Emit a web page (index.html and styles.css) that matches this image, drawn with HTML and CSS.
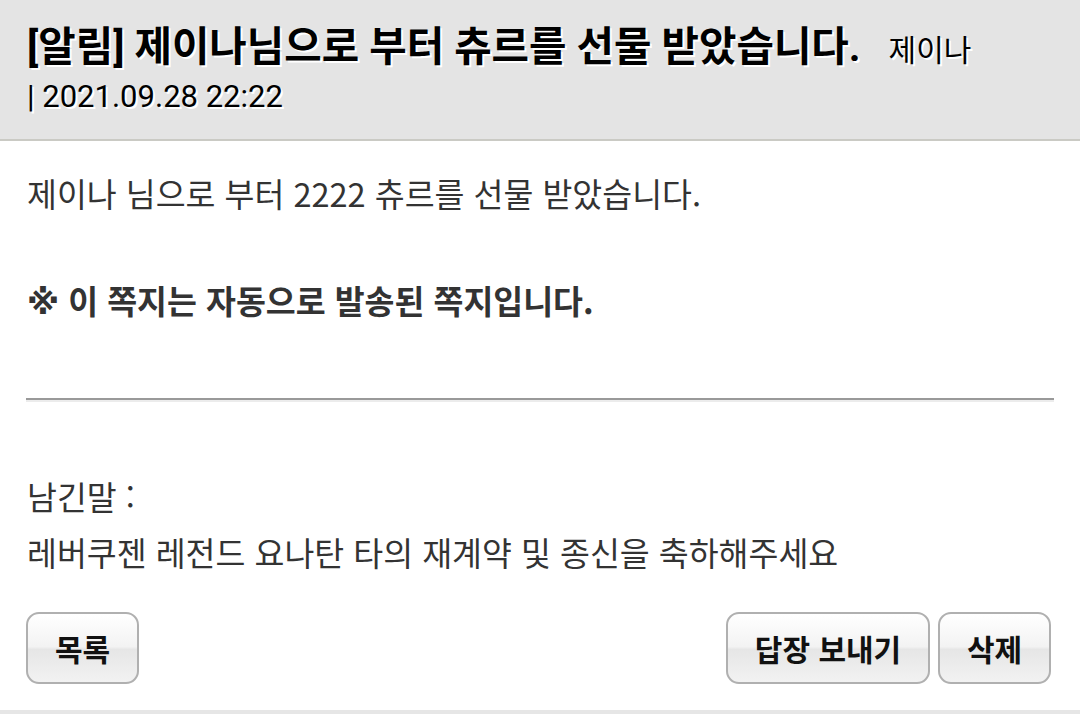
FILE: index.html
```html
<!DOCTYPE html>
<html lang="ko">
<head>
<meta charset="utf-8">
<title>쪽지</title>
<link rel="stylesheet" href="styles.css">
</head>
<body>
<div class="page">
  <header class="head">
    <div class="title-row">
      <span class="title">[알림] 제이나님으로 부터 츄르를 선물 받았습니다.</span>
      <span class="sender">제이나</span>
    </div>
    <div class="date">| 2021.09.28 22:22</div>
  </header>
  <main class="content">
    <p class="msg">제이나 님으로 부터 2222 츄르를 선물 받았습니다.</p>
    <p class="notice"><span class="mark">※</span> 이 쪽지는 자동으로 발송된 쪽지입니다.</p>
    <div class="rule"></div>
    <p class="label">남긴말 :</p>
    <p class="memo">레버쿠젠 레전드 요나탄 타의 재계약 및 종신을 축하해주세요</p>
    <div class="actions">
      <button class="btn btn-list">목록</button>
      <div class="right">
        <button class="btn btn-reply">답장 보내기</button>
        <button class="btn btn-del">삭제</button>
      </div>
    </div>
  </main>
  <div class="foot"></div>
</div>
</body>
</html>
```
FILE: styles.css
```css
* { box-sizing: border-box; }
html, body { margin: 0; padding: 0; background: #fff; }
body {
  width: 1080px;
  height: 714px;
  overflow: hidden;
  font-family: Roboto, "Noto Sans CJK KR", sans-serif;
}
.page { display: flex; flex-direction: column; height: 714px; }
.head {
  height: 141px;
  background: #e4e4e4;
  border-bottom: 2px solid #cacac4;
  padding: 23px 0 0 27px;
  text-shadow: 2px 2px 0 #fff;
  color: #000;
}
.title-row { display: flex; align-items: baseline; gap: 28px; line-height: 48px; }
.title { font-size: 40.7px; font-weight: 700; }
.sender { font-size: 30px; }
.date { font-size: 31px; line-height: 40px; margin-top: 2px; }
.content { flex: 1; padding: 0 26px 0 27px; color: #333; font-family: "Noto Sans CJK KR", Roboto, sans-serif; }
.content p { margin: 0; }
.msg { font-size: 32.5px; line-height: 40px; margin-top: 32px !important; }
.notice { font-size: 32.5px; line-height: 40px; height: 40px; font-weight: 700; margin-top: 67px !important; }
.mark { font-family: "DejaVu Sans", sans-serif; font-weight: 700; font-size: 33px; line-height: 20px; }
.rule {
  margin-top: 78px;
  margin-left: -1px;
  height: 4px;
  border-top: 2px solid #999;
  border-bottom: 2px solid #ececec;
}
.label { font-size: 32.5px; line-height: 40px; margin-top: 74px !important; }
.memo { font-size: 32.5px; line-height: 40px; margin-top: 16px !important; }
.actions { display: flex; justify-content: space-between; margin-top: 40px; padding-right: 3px; }
.right { display: flex; gap: 8px; }
.btn {
  height: 72px;
  border: 2px solid #b0b0b0;
  border-radius: 13px;
  background: linear-gradient(#ffffff 0%, #f3f3f3 48%, #e6e6e6 52%, #f2f2f2 100%);
  font-family: "Noto Sans CJK KR", sans-serif;
  font-size: 30px;
  font-weight: 700;
  color: #111;
  padding: 0;
  margin: 0;
}
.btn-list { width: 113px; margin-left: -1px; }
.btn-reply { width: 204px; }
.btn-del { width: 113px; }
.foot { height: 4px; background: #e6e6e6; }
```
